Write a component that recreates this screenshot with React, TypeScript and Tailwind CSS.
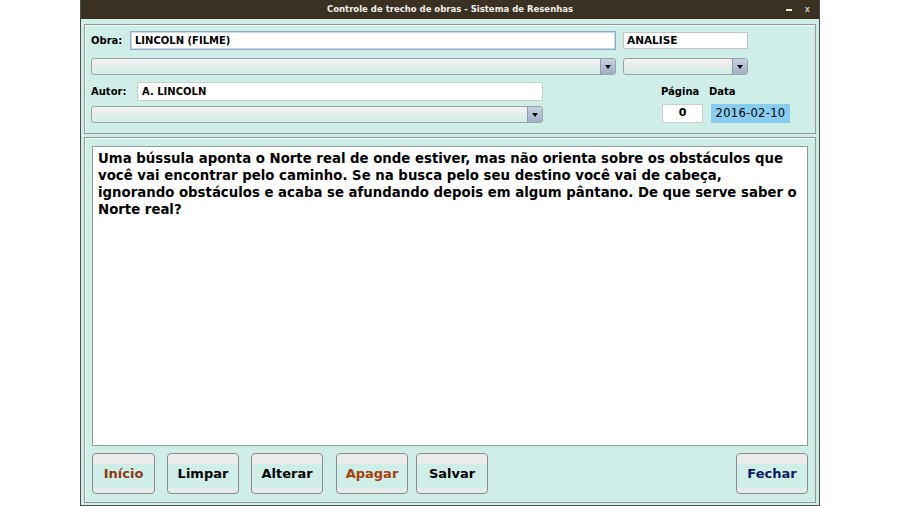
import React from 'react';

const font = { fontFamily: '"DejaVu Sans", "Liberation Sans", sans-serif' };

const texto =
  'Uma bússula aponta o Norte real de onde estiver, mas não orienta sobre os obstáculos que você vai encontrar pelo caminho. Se na busca pelo seu destino você vai de cabeça, ignorando obstáculos e acaba se afundando depois em algum pântano. De que serve saber o Norte real?';

// Combo estilo Swing (vazio)
const Combo = ({ w }: { w: string }) => (
  <div
    className={`${w} h-[17px] flex rounded-[3px] border border-[#9aa3a1] overflow-hidden bg-[linear-gradient(#f2f2f2_0%,#ececec_45%,#dbefea_55%,#d9eee9_100%)]`}
  >
    <div className="flex-1" />
    <div className="w-[15px] h-full flex items-center justify-center border-l border-[#8e9aab] bg-[linear-gradient(#c6d2e0,#9fb0c6)]">
      <div className="w-0 h-0 border-l-[3px] border-r-[3px] border-t-[4px] border-l-transparent border-r-transparent border-t-black" />
    </div>
  </div>
);

const Botao = ({
  label,
  w,
  cor = 'text-black',
}: {
  label: string;
  w: string;
  cor?: string;
}) => (
  <button
    className={`${w} h-[41px] rounded-[4px] border border-[#8c8c8c] text-[13px] font-bold ${cor} bg-[linear-gradient(#ececec_0%,#ececec_24%,#cfeee8_26%,#cfeee8_86%,#e6ece9_88%,#e6ece9_100%)] flex items-center justify-center`}
  >
    {label}
  </button>
);

export default function App() {
  return (
    <div className="w-[900px] h-[506px] bg-white flex justify-center" style={font}>
      <div className="w-[740px] h-[506px] flex flex-col border-x border-b border-[#4a4a4a]">
        {/* Barra de titulo */}
        <div className="h-[19px] bg-[#3a3122] relative flex items-center justify-center">
          <span className="text-[8.5px] font-bold text-[#f2f0ea]">
            Controle de trecho de obras - Sistema de Resenhas
          </span>
          <div className="absolute right-[9px] top-0 h-full flex items-center gap-[13px]">
            <div className="w-[6px] h-[2px] bg-[#f3ecd0]" />
            <span className="text-[8px] font-bold text-[#bdbdbd]">x</span>
          </div>
        </div>

        {/* Corpo */}
        <div className="flex-1 bg-[#cfeee8] px-[3px] pt-[5px] pb-[2px] flex flex-col gap-[3px]">
          {/* Painel superior */}
          <div className="h-[110px] border border-[#8f9996] shadow-[inset_1px_1px_0_#f4fbfa] pl-[6px] pt-[6px]">
            <div className="flex items-center h-[19px]">
              <span className="w-[39px] text-[10px] font-bold text-black">Obra:</span>
              <div className="w-[486px] h-[19px] bg-white border border-[#8fa9c6] shadow-[inset_0_0_0_1px_#c9d9ea] flex items-center pl-[4px] text-[10px] font-bold text-black">
                LINCOLN (FILME)
              </div>
              <div className="ml-[7px] w-[125px] h-[17px] bg-white border border-[#bfc6c4] flex items-center pl-[3px] text-[10.5px] font-bold text-black">
                ANALISE
              </div>
            </div>
            <div className="flex mt-[8px]">
              <Combo w="w-[525px]" />
              <div className="w-[7px]" />
              <Combo w="w-[125px]" />
            </div>
            <div className="flex">
              <div className="w-[452px]">
                <div className="flex items-center h-[19px] mt-[7px]">
                  <span className="w-[46px] text-[10px] font-bold text-black">Autor:</span>
                  <div className="w-[406px] h-[19px] bg-white border border-[#c8cecc] flex items-center pl-[4px] text-[10px] font-bold text-black">
                    A. LINCOLN
                  </div>
                </div>
                <div className="mt-[5px]">
                  <Combo w="w-[452px]" />
                </div>
              </div>
              <div className="ml-[118px] mt-[9px]">
                <div className="flex h-[14px] items-center text-[10px] font-bold text-black">
                  <span className="w-[48px]">Página</span>
                  <span>Data</span>
                </div>
                <div className="flex mt-[6px]">
                  <div className="w-[41px] h-[19px] ml-[1px] bg-white border border-[#c8cecc] flex items-center justify-center text-[11px] font-bold text-black">
                    0
                  </div>
                  <div className="ml-[8px] w-[79px] h-[19px] bg-[#87cdf0] flex items-center justify-center text-[11.5px] tracking-[0.3px] text-black">
                    2016-02-10
                  </div>
                </div>
              </div>
            </div>
          </div>

          {/* Painel inferior */}
          <div className="flex-1 border border-[#8f9996] shadow-[inset_1px_1px_0_#f4fbfa] px-[7px] pt-[8px] pb-[8px] flex flex-col">
            <div className="flex-1 bg-white border border-[#8f9996] px-[5px] pt-[3px] text-[13.3px] leading-[17px] font-bold text-black">
              {texto}
            </div>
            <div className="flex mt-[7px] items-center">
              <Botao label="Início" w="w-[63px]" cor="text-[#8a3a16]" />
              <div className="w-[12px]" />
              <Botao label="Limpar" w="w-[72px]" />
              <div className="w-[12px]" />
              <Botao label="Alterar" w="w-[72px]" />
              <div className="w-[13px]" />
              <Botao label="Apagar" w="w-[72px]" cor="text-[#a4400c]" />
              <div className="w-[8px]" />
              <Botao label="Salvar" w="w-[72px]" />
              <div className="flex-1" />
              <Botao label="Fechar" w="w-[72px]" cor="text-[#0c1c5c]" />
            </div>
          </div>
        </div>
      </div>
    </div>
  );
}
